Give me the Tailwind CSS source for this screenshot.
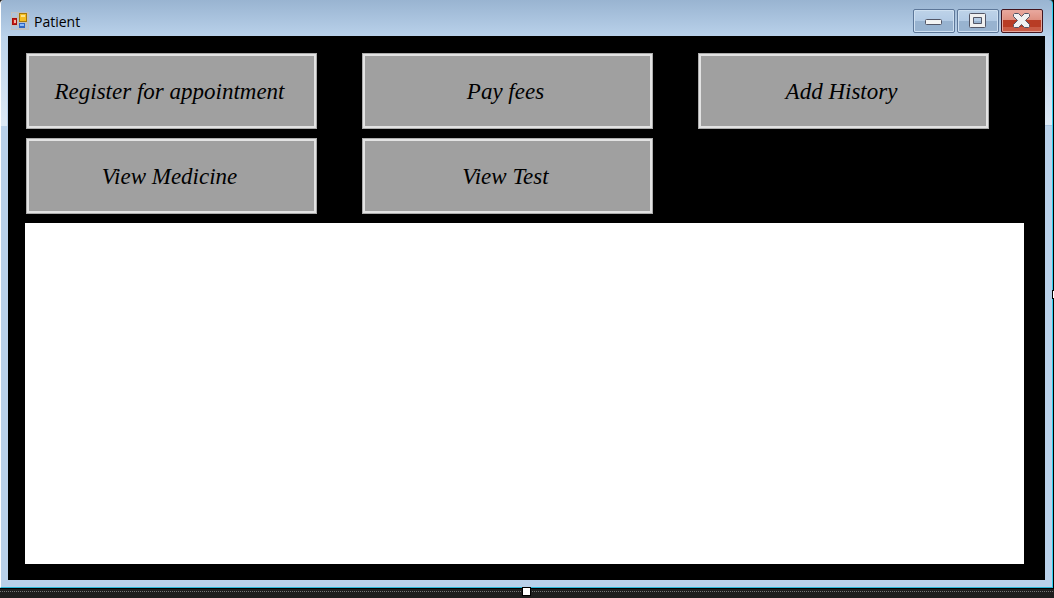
<!DOCTYPE html>
<html lang="en">
<head>
<meta charset="utf-8">
<title>Patient</title>
<script src="https://cdn.jsdelivr.net/npm/@tailwindcss/browser@4"></script>
</head>
<body class="flex min-h-screen flex-col bg-[#1e1e1e]">
<div class="relative flex flex-1 flex-col border-r border-black">
  <div class="flex flex-1 flex-col rounded-t-sm border-r border-b border-l border-r-[#2fd0f0] border-b-[#2ab8d8] border-l-white bg-linear-to-b from-[#99b4d1] from-0% to-[#b9d1ea] to-[36px] px-[7px] pb-[7px]">
    <header class="flex h-9 items-start justify-between pr-0.5 pl-[3px]">
      <div class="flex items-center gap-[5px] pt-3">
        <svg class="h-[18px] w-[18px]" viewBox="0 0 18 18" shape-rendering="crispEdges" aria-hidden="true">
          <path d="M0 0H18V18H0Z" fill="#c0c0c0"/><path d="M1 1H6V5H1ZM1 14H7V17H1ZM15 12H17V17H15Z" fill="#b0c4da"/>
          <path d="M1 6H6V13H1Z" fill="#a40d0d"/><path d="M2 7H5V12H2Z" fill="#c91c16"/><path d="M3 8H5V11H3Z" fill="#f1b5a4"/>
          <path d="M8 1H16V10H8Z" fill="#a77908"/><path d="M9 2H15V9H9Z" fill="#f5bd22"/><path d="M10 3H14V5H10Z" fill="#ffe487"/>
          <path d="M8 11H14V16H8Z" fill="#2e66c4"/><path d="M9 12H13V14H9Z" fill="#8cbaf8"/>
        </svg>
        <h1 class="pt-0.5 font-['Open_Sans',sans-serif] text-sm leading-4 text-black">Patient</h1>
      </div>
      <div class="flex gap-0.5 pt-[9px]">
        <button type="button" aria-label="Minimize" class="flex h-6 w-[42px] items-center justify-center rounded-xs border border-[#5d7799] bg-linear-to-b from-[#bed3e9] from-0% via-[#b2cae4] via-50% to-[#a7c2df] to-100% inset-ring inset-ring-[#cfe0f1]">
          <svg class="h-6 w-10" viewBox="0 0 40 24" aria-hidden="true"><path d="M1 12H39V22H1Z" fill="#98b3d0"/><rect x="11.500" y="10.500" width="16" height="5" rx="1" fill="#f4f4f4" stroke="#535666"/></svg>
        </button>
        <button type="button" aria-label="Maximize" class="flex h-6 w-[42px] items-center justify-center rounded-xs border border-[#5d7799] bg-linear-to-b from-[#bed3e9] from-0% via-[#b2cae4] via-50% to-[#a7c2df] to-100% inset-ring inset-ring-[#cfe0f1]">
          <svg class="h-6 w-10" viewBox="0 0 40 24" aria-hidden="true"><path d="M1 12H39V22H1Z" fill="#98b3d0"/><path fill-rule="evenodd" d="M12.500 4.500H26.500Q27.500 4.500 27.500 5.500V17.500Q27.500 18.500 26.500 18.500H12.500Q11.500 18.500 11.500 17.500V5.500Q11.500 4.500 12.500 4.500ZM15.500 8.500V14.500H23.500V8.500Z" fill="#f0f0f0" stroke="#535666"/></svg>
        </button>
        <button type="button" aria-label="Close" class="flex h-6 w-[42px] items-center justify-center rounded-xs border border-[#43141d] bg-linear-to-b from-[#e9a99f] to-[#d0705b] inset-ring inset-ring-[#e5a69b]">
          <svg class="h-6 w-10" viewBox="0 0 40 24" aria-hidden="true"><path d="M1 11H39V22H1Z" fill="#b83c25"/><path d="M1 18H39V22H1Z" fill="#c95b45"/><path d="M12.500 4.500H16.500L19.500 7.500L22.500 4.500H26.500L27.500 5.500V7.500L23.500 11.500L27.500 15.500V17.500L26.500 18.500H22.500L19.500 15.500L16.500 18.500H12.500L11.500 17.500V15.500L15.500 11.500L11.500 7.500V5.500Z" fill="#f1f1f1" stroke="#535666" stroke-linejoin="round"/></svg>
        </button>
      </div>
    </header>
    <main class="flex flex-1 flex-col gap-[9px] bg-black pt-[17px] pr-[21px] pb-4 pl-[17px] font-['Liberation_Serif',serif] text-[23px] text-black italic">
      <nav class="flex flex-wrap gap-x-[45px] gap-y-[9px] pl-px" aria-label="Patient actions">
        <button type="button" class="h-[76px] w-[291px] border border-[#acacac] bg-[#a0a0a0] pt-0.5 pr-1 inset-ring-2 inset-ring-[#e3e3e3]">Register for appointment</button>
        <button type="button" class="h-[76px] w-[291px] border border-[#acacac] bg-[#a0a0a0] pt-0.5 pr-1 inset-ring-2 inset-ring-[#e3e3e3]">Pay fees</button>
        <button type="button" class="h-[76px] w-[291px] border border-[#acacac] bg-[#a0a0a0] pt-0.5 pr-1 inset-ring-2 inset-ring-[#e3e3e3]">Add History</button>
        <button type="button" class="h-[76px] w-[291px] border border-[#acacac] bg-[#a0a0a0] pt-0.5 pr-1 inset-ring-2 inset-ring-[#e3e3e3]">View Medicine</button>
        <button type="button" class="h-[76px] w-[291px] border border-[#acacac] bg-[#a0a0a0] pt-0.5 pr-1 inset-ring-2 inset-ring-[#e3e3e3]">View Test</button>
      </nav>
      <section class="flex-1 bg-white" aria-label="Details"></section>
    </main>
  </div>
  <!-- Lit upper part of the side frame -->
  <div class="absolute top-9 right-px h-[90px] w-[7px] border-b border-[#a9c4e0] bg-linear-to-b from-[#bcd3eb] to-[#dde9f5]"></div>
  <div class="absolute top-9 left-px h-[90px] w-1.5 bg-linear-to-b from-[#bcd3eb] to-[#dde9f5]"></div>
  <!-- Resize handles -->
  <div class="absolute inset-y-0 -right-px my-auto h-[9px] w-0.5 border border-r-0 border-black bg-white"></div>
  <div class="absolute inset-x-0 -bottom-2 mx-auto h-[9px] w-[9px] border border-black bg-white"></div>
</div>
<footer class="h-2.5 border-t border-black pt-0.5">
  <div class="h-px bg-[repeating-linear-gradient(90deg,#777_0_1px,#1e1e1e_1px_2px)]"></div>
</footer>
</body>
</html>
